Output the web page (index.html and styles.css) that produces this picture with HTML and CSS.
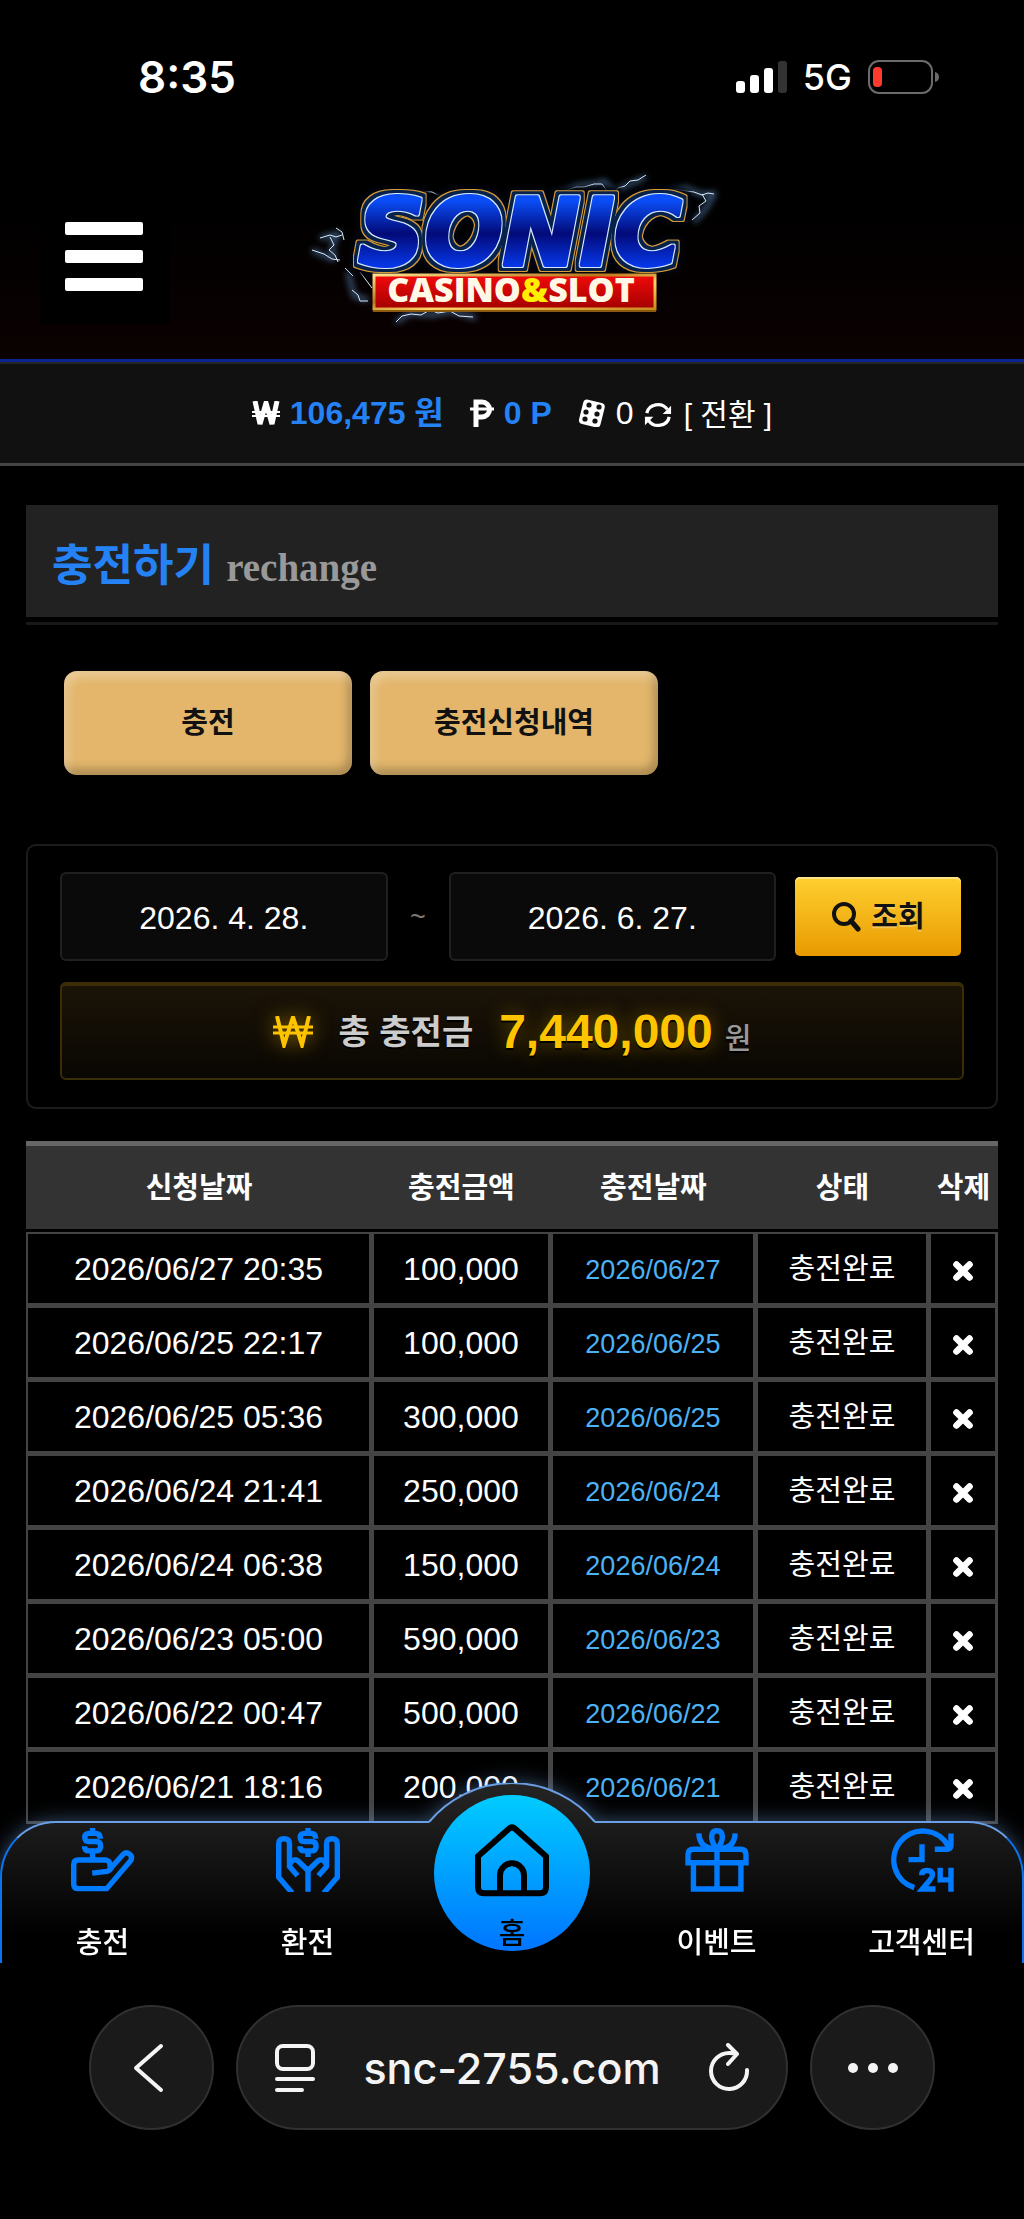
FILE: index.html
```html
<!DOCTYPE html>
<html lang="ko">
<head>
  <meta charset="UTF-8">
  <meta name="viewport" content="width=device-width, initial-scale=1">
  <title>충전하기</title>
  <link rel="stylesheet" href="styles.css">
</head>
<body>
  <div class="status-bar">
    <span class="time">8:35</span>
    <div class="status-icons">
      <svg width="51" height="33" viewBox="0 0 51 33" fill="#fff">
        <rect x="0" y="20" width="9" height="12" rx="3"/>
        <rect x="14" y="14" width="9" height="18" rx="3"/>
        <rect x="28" y="7" width="9" height="25" rx="3"/>
        <rect x="42" y="0" width="9" height="32" rx="3" fill="#333"/>
      </svg>
      <span class="network">5G</span>
      <svg width="72" height="34" viewBox="0 0 72 34">
        <rect x="1" y="1" width="63" height="32" rx="10" fill="none" stroke="#6b6b6b" stroke-width="2"/>
        <rect x="5" y="7" width="9" height="20" rx="4" fill="#ff3b30"/>
        <path d="M67 12q4 1 4 5t-4 5z" fill="#6b6b6b"/>
      </svg>
    </div>
  </div>

  <header class="header">
    <button class="menu-btn" aria-label="메뉴">
      <span></span><span></span><span></span>
    </button>
    <a class="logo" href="#" aria-label="SONIC CASINO&amp;SLOT">
      <svg width="430" height="180" viewBox="-3 0 430 180">
        <defs>
          <linearGradient id="blue" x1="0" y1="0" x2="0" y2="1">
            <stop offset="0.2" stop-color="#0a4cf5"/>
            <stop offset="0.5" stop-color="#020a78"/>
            <stop offset="0.8" stop-color="#0636e6"/>
          </linearGradient>
          <linearGradient id="gold" x1="0" y1="0" x2="1" y2="1">
            <stop offset="0" stop-color="#ffe08a"/>
            <stop offset="0.4" stop-color="#b9761b"/>
            <stop offset="0.6" stop-color="#ffd569"/>
            <stop offset="1" stop-color="#c98a1c"/>
          </linearGradient>
          <linearGradient id="red" x1="0" y1="0" x2="0" y2="1">
            <stop offset="0" stop-color="#f30a0a"/>
            <stop offset="1" stop-color="#a30000"/>
          </linearGradient>
          <filter id="glow" x="-20%" y="-20%" width="140%" height="140%">
            <feGaussianBlur stdDeviation="3"/>
          </filter>
          <!-- white, navy, gold and dark rims behind the letters -->
          <filter id="rims" x="-10%" y="-20%" width="120%" height="140%" color-interpolation-filters="sRGB">
            <feMorphology in="SourceAlpha" operator="dilate" radius="1" result="a0"/>
            <feMorphology in="SourceAlpha" operator="dilate" radius="4" result="a1"/>
            <feMorphology in="SourceAlpha" operator="dilate" radius="5" result="a2"/>
            <feMorphology in="SourceAlpha" operator="dilate" radius="8" result="a3"/>
            <feGaussianBlur in="a3" stdDeviation="2" result="a3"/>
            <feFlood flood-color="#d6e8ff"/><feComposite in2="a0" operator="in" result="white"/>
            <feFlood flood-color="#06224a"/><feComposite in2="a1" operator="in" result="navy"/>
            <feFlood flood-color="#d79a35"/><feComposite in2="a2" operator="in" result="rim"/>
            <feFlood flood-color="#03060f"/><feComposite in2="a3" operator="in" result="dark"/>
            <feMerge>
              <feMergeNode in="dark"/><feMergeNode in="rim"/><feMergeNode in="navy"/><feMergeNode in="white"/><feMergeNode in="SourceGraphic"/>
            </feMerge>
          </filter>
        </defs>
        <!-- lightning -->
        <g fill="none" stroke="#6fa8e8" stroke-width="4" opacity="0.6" filter="url(#glow)">
          <path d="M254 36l24-10 18-2 8-3 10 11 14-7 18-8"/>
          <path d="M366 33l20-5 14 6 14 0-8 14-12 14"/>
          <path d="M20 78l18-4-6 12 2 12M12 90l22 10"/>
          <path d="M96 162l14-9 22 2 20-4 24 7"/>
          <path d="M48 112l6 24 14 4"/>
        </g>
        <g fill="none" stroke="#d6eaff" stroke-width="1" stroke-linejoin="round">
          <path d="M254 36l10-5 12-4 8 0 10-3 8 0 5 7 6 2 5-5 7-2 5-5 8-1 8-5"/>
          <path d="M366 33l8-4 12 2 8 1 8 3 6-2 6 1M402 34l4 7-7 5 1 7-8 7"/>
          <path d="M110 35l8-4 14 1 6 3 9-1"/>
          <path d="M20 78l10-3 6 2 6-2M30 77l4 8-5 5 6 5 3 7M12 90l12 4 8 5 8 1M36 68l6 4 2 8"/>
          <path d="M96 162l6-6 9-2 10 1 9-5 8 3 12-2 9 5 14 1"/>
          <path d="M45 108l8 8M52 130l6 5 2 6 8 0M60 112l12 16"/>
        </g>
        <text class="logo-title" x="220" y="105">SONIC</text>
        <rect x="74" y="115" width="281" height="34" fill="url(#red)" stroke="url(#gold)" stroke-width="3"/>
        <path d="M73 151h283" stroke="#8a5a10" stroke-width="2"/>
        <text class="logo-sub" x="211" y="142">CASINO<tspan fill="#ffee00">&amp;</tspan>SLOT</text>
      </svg>
    </a>
  </header>

  <div class="user-bar">
    <div class="money">
      <svg width="28" height="24" viewBox="0 0 28 24" fill="none" stroke="#fff">
        <path d="M3 0l5 23 6-21 6 21 5-23" stroke-width="5"/>
        <path d="M0 11h28M0 15h28" stroke-width="2"/>
      </svg>
      <strong>106,475 원</strong>
    </div>
    <div class="money">
      <svg width="24" height="28" viewBox="0 0 24 28" fill="none" stroke="#fff">
        <path d="M6 28V3h6a6 6 0 0 1 0 15H6" stroke-width="5"/>
        <path d="M0 10h24" stroke-width="3"/>
      </svg>
      <strong>0 P</strong>
    </div>
    <div class="rolling">
      <svg width="28" height="28" viewBox="0 0 28 28">
        <rect x="3" y="2" width="22" height="25" rx="4" fill="#fff" transform="rotate(14 14 14)"/>
        <g fill="#111">
          <circle cx="11" cy="6" r="2.6"/><circle cx="8" cy="13" r="2.6"/><circle cx="7" cy="20" r="2.6"/>
          <circle cx="21" cy="8" r="2.6"/><circle cx="19" cy="15" r="2.6"/><circle cx="17" cy="22" r="2.6"/>
        </g>
      </svg>
      <span>0</span>
      <button class="convert">
        <svg width="28" height="28" viewBox="0 0 30 28">
          <path d="M3 12A12 11 0 0 1 25 8M27 16A12 11 0 0 1 5 20" fill="none" stroke="#fff" stroke-width="3.5"/>
          <path d="M29 4v9H20zM1 25V16h9z" fill="#fff"/>
        </svg>
        [ 전환 ]
      </button>
    </div>
  </div>

  <main class="content">
    <div class="title-wrap">
      <h1 class="title">충전하기 <small>rechange</small></h1>
    </div>

    <div class="tabs">
      <button class="tab">충전</button>
      <button class="tab">충전신청내역</button>
    </div>

    <section class="search-box">
      <form class="search-row">
        <input type="text" aria-label="시작일" value="2026. 4. 28.">
        <span class="tilde">~</span>
        <input type="text" aria-label="종료일" value="2026. 6. 27.">
        <button type="button" class="search-btn">
          <svg width="30" height="30" viewBox="0 0 30 30" fill="none" stroke="#111">
            <circle cx="13" cy="12" r="10" stroke-width="4"/>
            <path d="M20 19l7 8" stroke-width="5" stroke-linecap="round"/>
          </svg>
          조회
        </button>
      </form>
      <div class="total">
        <svg class="won" width="40" height="32" viewBox="0 0 40 32" fill="none" stroke="#ffc400">
          <path d="M4 0l7 29 9-28 9 28 7-29" stroke-width="4"/>
          <path d="M0 11h40M0 17h40" stroke-width="3"/>
        </svg>
        <span class="total-label">총 충전금</span>
        <strong>7,440,000</strong>
        <span class="unit">원</span>
      </div>
    </section>

    <table class="history">
      <colgroup>
        <col class="c-request"><col class="c-amount"><col class="c-date"><col class="c-state"><col class="c-delete">
      </colgroup>
      <thead>
        <tr><th>신청날짜</th><th>충전금액</th><th>충전날짜</th><th>상태</th><th>삭제</th></tr>
      </thead>
      <tbody id="rows"></tbody>
    </table>
  </main>

  <div class="dock">
    <nav class="bottom-nav">
      <div class="nav-shape">
        <svg width="170" height="44" viewBox="0 0 170 44">
          <defs>
            <linearGradient id="bump" x1="0" y1="0" x2="0" y2="1">
              <stop offset="0" stop-color="#242424"/>
              <stop offset="1" stop-color="#1c1c1c"/>
            </linearGradient>
          </defs>
          <path d="M2 39A108 108 0 0 1 168 39V44H2z" fill="url(#bump)"/>
          <path d="M2 39A108 108 0 0 1 168 39" fill="none" stroke="#6a9fe6" stroke-width="2"/>
        </svg>
      </div>
      <a class="nav-item" href="#">
        <svg width="64" height="64" viewBox="210 204 190 190" fill="none" stroke="#007bff" stroke-width="16">
          <path d="M297 236q0-16-14-16h-19q-13 0-13 12t13 12h20q14 0 14 14t-14 14h-20q-14 0-14-14M274 204v14M274 272v26"/>
          <path d="M273 338l44-5q10-3 14-13l32-36q10-11 20-3 11 8 4 20l-71 83h-84q-14 0-14-14v-57q0-14 14-14h80q17 2 13 23"/>
        </svg>
        <span>충전</span>
      </a>
      <a class="nav-item" href="#">
        <svg width="64" height="64" viewBox="825 204 190 190" fill="none" stroke="#007bff" stroke-width="16">
          <path d="M943 236q0-16-14-16h-19q-13 0-13 12t13 12h20q14 0 14 14t-14 14h-20q-14 0-14-14M920 204v14M920 272v18"/>
          <path d="M873 397l-40-47V251q0-15 16-15t16 15v67l24 28M867 310q10-18 24-8l29 28v63"/>
          <path d="M967 397l40-47V251q0-15-16-15t-16 15v67l-24 28M973 310q-10-18-24-8l-29 28"/>
        </svg>
        <span>환전</span>
      </a>
      <a class="nav-item home" href="#">
        <svg width="74" height="74" viewBox="1425 188 222 222" fill="none" stroke="#000" stroke-width="18">
          <path d="M1434 288l92-82q10-9 20 0l92 82v93q0 18-18 18h-168q-18 0-18-18z"/>
          <path d="M1500 399v-54a36 36 0 0 1 72 0v54"/>
        </svg>
        <span>홈</span>
      </a>
      <a class="nav-item" href="#">
        <svg width="64" height="64" viewBox="553 204 190 190" fill="none" stroke="#007bff" stroke-width="16">
          <path d="M578 315v70h141v-70M648 267v118M562 307v-24q0-16 16-16h140q16 0 16 16v24z"/>
          <path d="M648 267q-16-20-16-36 0-19 16-19t16 19q0 16-16 36zM594 220q2 46 52 46M702 220q-2 46-52 46"/>
        </svg>
        <span>이벤트</span>
      </a>
      <a class="nav-item" href="#">
        <svg width="64" height="64" viewBox="1167 204 190 190" fill="none" stroke="#007bff" stroke-width="16">
          <path d="M1239 381A86 86 0 1 1 1340 258M1300 267h36q12 0 12-12v-35M1262 252v46h-40"/>
          <path d="M1261 344q0-14 16-14t16 13q0 8-8 16l-22 26h39M1316 322v36h32M1348 322v71"/>
        </svg>
        <span>고객센터</span>
      </a>
    </nav>
    <div class="browser-bar">
      <button class="round" aria-label="뒤로">
        <svg width="50" height="50" viewBox="0 0 50 50" fill="none" stroke="#f4f4f4" stroke-width="4" stroke-linecap="round" stroke-linejoin="round">
          <path d="M34 3L9 25l25 22"/>
        </svg>
      </button>
      <div class="address">
        <svg width="42" height="50" viewBox="0 0 42 50" fill="none" stroke="#f4f4f4" stroke-width="4" stroke-linecap="round">
          <rect x="3" y="3" width="36" height="23" rx="6"/>
          <path d="M3 36h36M3 47h25"/>
        </svg>
        <input type="text" aria-label="주소" value="snc-2755.com">
        <button aria-label="새로고침">
          <svg width="42" height="50" viewBox="0 0 42 50" fill="none" stroke="#f4f4f4" stroke-width="4" stroke-linecap="round" stroke-linejoin="round">
            <path d="M39 27a18 18 0 1 1-18-17q5 0 8 1M20 2l9 9-9 10"/>
          </svg>
        </button>
      </div>
      <button class="round" aria-label="더보기">
        <svg width="52" height="12" viewBox="0 0 52 12" fill="#f4f4f4">
          <circle cx="6" cy="6" r="5"/><circle cx="26" cy="6" r="5"/><circle cx="46" cy="6" r="5"/>
        </svg>
      </button>
    </div>
  </div>

  <script>
    const list = [
      ['2026/06/27 20:35', '100,000'],
      ['2026/06/25 22:17', '100,000'],
      ['2026/06/25 05:36', '300,000'],
      ['2026/06/24 21:41', '250,000'],
      ['2026/06/24 06:38', '150,000'],
      ['2026/06/23 05:00', '590,000'],
      ['2026/06/22 00:47', '500,000'],
      ['2026/06/21 18:16', '200,000']
    ];
    const icon = '<svg width="24" height="24" viewBox="0 0 22 22"><path d="M5 5l12 12M17 5L5 17" stroke="#fff" stroke-width="6" stroke-linecap="round"/></svg>';
    document.getElementById('rows').innerHTML = list.map(function(row) {
      return '<tr><td>' + row[0] + '</td><td>' + row[1] + '</td>' +
        '<td class="done-date">' + row[0].split(' ')[0] + '</td>' +
        '<td>충전완료</td><td><button class="delete" aria-label="삭제">' + icon + '</button></td></tr>';
    }).join('');
  </script>
</body>
</html>
```
FILE: styles.css
```css
* { box-sizing: border-box; }
body {
  background: #000;
  color: #fff;
  margin: 0;
  min-height: 100vh;
  font-family: "Liberation Sans", "Noto Sans CJK KR", sans-serif;
  font-size: 32px;
  line-height: 40px;
}
svg { display: block; flex: none; }
a { color: inherit; text-decoration: none; }
button {
  background: none;
  border: none;
  color: inherit;
  font: inherit;
  padding: 0;
  cursor: pointer;
}
input {
  font: inherit;
  color: inherit;
  text-align: center;
  min-width: 0;
}

/* status bar */
.status-bar {
  height: 160px;
  padding: 53px 84px 0 138px;
  display: flex;
  justify-content: space-between;
  align-items: flex-start;
  font-family: Inter, sans-serif;
  line-height: 48px;
}
.time { font-size: 44px; font-weight: 600; }
.status-icons {
  display: flex;
  align-items: center;
  gap: 16px;
}
.network { font-size: 36px; font-weight: 500; }

/* header */
.header {
  display: grid;
  grid-template-columns: 1fr auto 1fr;
  align-items: start;
  padding-bottom: 19px;
  background: linear-gradient(#000 20%, #0b0101);
}
.menu-btn {
  display: flex;
  flex-direction: column;
  gap: 15px;
  width: 130px;
  margin: 40px 0 0 40px;
  padding: 22px 27px 33px 25px;
  background: #000;
}
.menu-btn span {
  height: 13px;
  border-radius: 2px;
  background: #fff;
}
.logo-title {
  font-family: "DejaVu Sans", sans-serif;
  font-size: 92px;
  font-weight: bold;
  font-style: italic;
  text-anchor: middle;
  fill: url(#blue);
  stroke: url(#blue);
  stroke-width: 4px;
  stroke-linejoin: round;
  filter: url(#rims);
}
.logo-sub {
  font-family: "Open Sans", sans-serif;
  font-size: 34px;
  font-weight: 800;
  text-anchor: middle;
  fill: #fff8e6;
}

/* money */
.user-bar {
  display: flex;
  justify-content: center;
  align-items: center;
  gap: 26px;
  height: 107px;
  background: #111;
  border-top: 3px solid #0a2494;
  border-bottom: 3px solid #444;
  box-shadow: inset 0 2px #262626;
}
.money {
  display: flex;
  align-items: center;
  gap: 10px;
}
.money strong { color: #2482f5; }
.rolling {
  display: flex;
  align-items: center;
  gap: 10px;
}
.convert {
  display: flex;
  align-items: center;
  gap: 12px;
  padding-top: 4px;
  font-size: 30px;
}

/* content */
.content { padding: 39px 26px 0; }
.title-wrap {
  padding-bottom: 5px;
  border-bottom: 3px solid #181818;
}
.title {
  height: 112px;
  margin: 0;
  padding: 0 26px;
  background: #222;
  color: #2482f5;
  font-size: 44px;
  line-height: 121px;
}
.title small {
  color: #999;
  font-family: "Liberation Serif", serif;
  font-size: 39px;
}
.tabs {
  display: flex;
  gap: 18px;
  padding: 46px 38px 69px;
}
.tab {
  width: 288px;
  height: 104px;
  border-radius: 13px;
  background: #e3b66c;
  box-shadow: inset 4px 6px 10px rgba(255,255,255,0.3), inset -4px -6px 10px rgba(0,0,0,0.25);
  color: #111;
  font-size: 29px;
  font-weight: bold;
}
.search-box {
  border: 2px solid #1c1c1c;
  border-radius: 10px;
  padding: 26px 32px 27px;
}
.search-row {
  display: flex;
  align-items: center;
  margin-bottom: 21px;
  padding-right: 3px;
}
.search-row input {
  flex: 1;
  height: 89px;
  padding: 4px 0 0;
  background: #0a0a0a;
  border: 2px solid #202020;
  border-radius: 6px;
}
.tilde {
  width: 61px;
  text-align: center;
  color: #777;
  font-size: 27px;
}
.search-btn {
  display: flex;
  align-items: center;
  justify-content: center;
  gap: 10px;
  width: 166px;
  height: 79px;
  margin-left: 19px;
  border-radius: 5px;
  background: linear-gradient(#ffd030, #e89a00);
  box-shadow: inset 0 2px #ffe38a;
  color: #111;
  font-size: 29px;
  font-weight: bold;
  text-shadow: 0 2px rgba(255,255,255,0.3);
}
.total {
  display: flex;
  align-items: center;
  justify-content: center;
  height: 98px;
  border: 2px solid #3b2d05;
  border-top-width: 4px;
  border-radius: 6px;
  background: linear-gradient(#1b1307, #090703);
  text-shadow: 0 2px #000;
}
.won { filter: drop-shadow(0 0 10px rgba(255,196,0,0.5)); }
.total-label {
  margin: 0 26px;
  color: #ccc;
  font-size: 34px;
  font-weight: bold;
}
.total strong {
  color: #ffc400;
  font-size: 48px;
  text-shadow: 0 2px #000, 0 0 20px rgba(255,196,0,0.4);
}
.unit {
  margin-left: 12px;
  padding-top: 8px;
  color: #999;
  font-family: "Noto Sans CJK KR", sans-serif;
  font-size: 29px;
  font-weight: 500;
}

/* history table */
.history {
  width: 100%;
  margin-top: 32px;
  table-layout: fixed;
  border-spacing: 0;
  text-align: center;
}
.c-request { width: 35.6%; }
.c-amount { width: 18.4%; }
.c-date { width: 21.1%; }
.c-state { width: 17.8%; }
.c-delete { width: 7.1%; }
.history th {
  height: 91px;
  padding: 0;
  background: #333;
  border-top: 5px solid #666;
  border-bottom: 3px solid #000;
  font-size: 29px;
  white-space: nowrap;
}
.history td {
  height: 74px;
  padding: 0;
  border: 2px solid #444;
  border-right-width: 3px;
  border-bottom-width: 3px;
}
.history td:nth-child(4) { font-size: 29px; }
.history td.done-date {
  padding-top: 3px;
  color: #4db2f5;
  font-size: 27px;
}
.delete { vertical-align: middle; }

/* fixed bottom area */
.dock {
  position: fixed;
  left: 0;
  right: 0;
  bottom: 0;
}
.bottom-nav {
  position: relative;
  display: flex;
  height: 142px;
}
.nav-shape {
  position: absolute;
  inset: 0;
  border: 2px solid #0a74f0;
  border-top-color: #6a9fe6;
  border-bottom: none;
  border-radius: 56px 56px 0 0;
  background: linear-gradient(#1c1c1c, #000 80%);
  filter: drop-shadow(0 0 10px rgba(120,170,240,0.45));
}
.nav-shape svg {
  position: absolute;
  left: 50%;
  top: -40px;
  margin-left: -85px;
}
.nav-item {
  position: relative;
  flex: 1;
  display: flex;
  flex-direction: column;
  align-items: center;
  justify-content: space-between;
  padding: 7px 0 3px;
  font-size: 29px;
  font-weight: 500;
  font-family: "Noto Sans CJK KR", sans-serif;
}
.home {
  flex: none;
  width: 156px;
  height: 156px;
  margin: -26px 24px 0;
  padding: 28px 0 0;
  border-radius: 50%;
  background: linear-gradient(#00ccff, #0075ff);
  color: #000;
}
.browser-bar {
  position: relative;
  display: flex;
  gap: 22px;
  padding: 42px 89px 89px;
  background: #000;
}
.round,
.address {
  display: flex;
  align-items: center;
  height: 125px;
  border: 2px solid #303030;
  border-radius: 63px;
  background: #1a1a1a;
}
.round {
  flex: none;
  width: 125px;
  justify-content: center;
}
.address {
  flex: 1;
  min-width: 0;
  padding: 0 36px;
}
.address input {
  flex: 1;
  padding: 0;
  background: none;
  border: none;
  color: #f4f4f4;
  font-family: Inter, sans-serif;
  font-size: 43px;
  font-weight: 500;
}
```
